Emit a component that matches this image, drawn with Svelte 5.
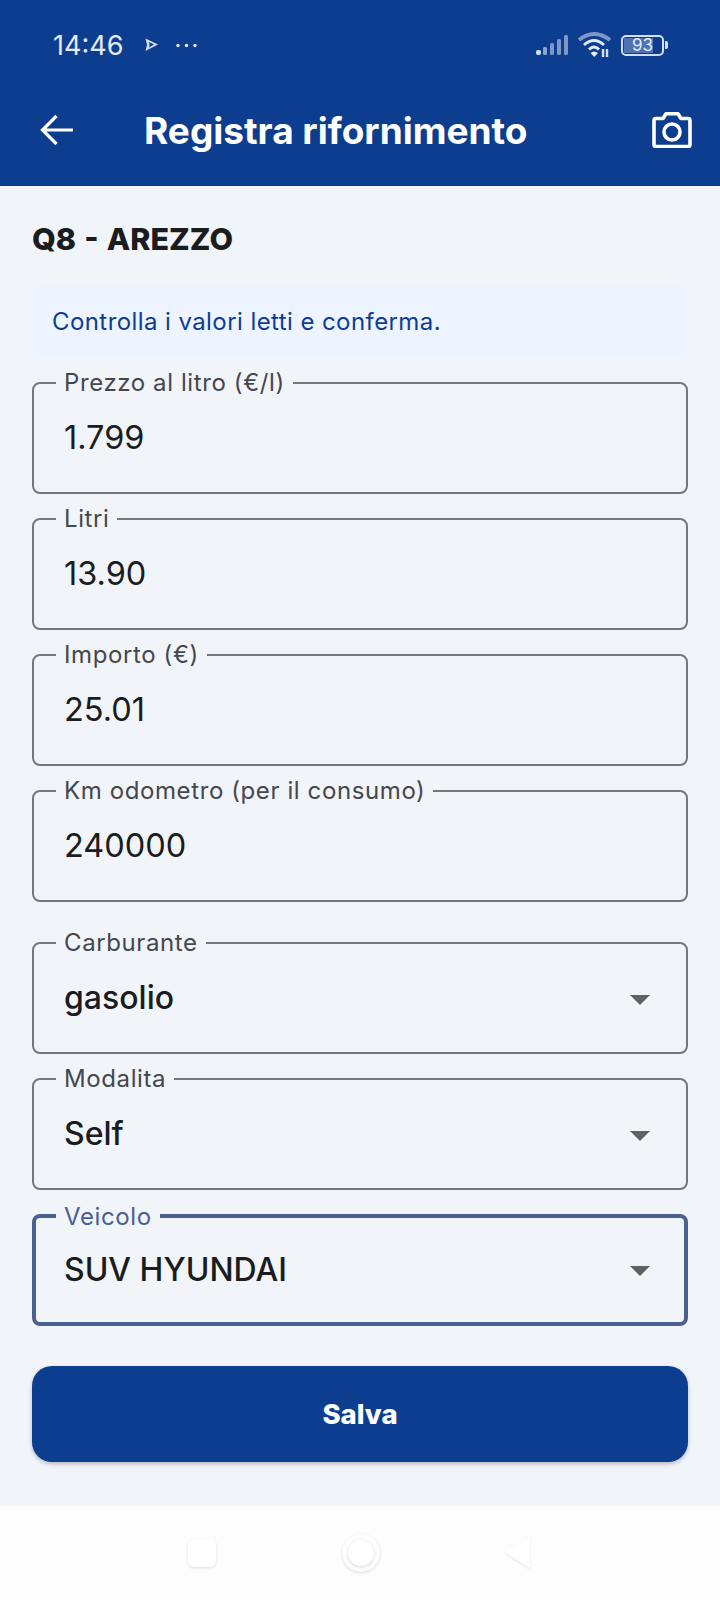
<script>
    const inputs = [
        { label: 'Prezzo al litro (€/l)', value: '1.799' },
        { label: 'Litri', value: '13.90' },
        { label: 'Importo (€)', value: '25.01' },
        { label: 'Km odometro (per il consumo)', value: '240000' }
    ];

    const selects = [
        { label: 'Carburante', value: 'gasolio', strong: true },
        { label: 'Modalita', value: 'Self', strong: true },
        { label: 'Veicolo', value: 'SUV HYUNDAI', focused: true }
    ];
</script>

<div class="screen">
    <header>
        <div class="status">
            <div class="status-left">
                <span class="time">14:46</span>
                <svg class="play" width="14" height="14" viewBox="0 0 14 14">
                    <path d="M0.5 0.5 L13 6.5 L0.5 13 L2 6.7 Z M4 4 L4.6 6.7 L4 9.4 L9 6.6 Z" fill="#d3def2" fill-rule="evenodd" />
                </svg>
                <svg class="dots" width="21" height="5" viewBox="0 0 21 5">
                    <circle cx="2" cy="2.5" r="1.7" fill="#e4ebf7" />
                    <circle cx="10.5" cy="2.5" r="1.7" fill="#e4ebf7" />
                    <circle cx="19" cy="2.5" r="1.7" fill="#e4ebf7" />
                </svg>
            </div>
            <div class="status-right">
                <svg width="34" height="22" viewBox="0 0 34 22">
                    <rect x="1" y="16" width="5" height="5" rx="2" fill="#d3def2" />
                    <rect x="8" y="13" width="4" height="8" rx="1.5" fill="#8ea5d0" />
                    <rect x="15" y="9" width="4" height="12" rx="1.5" fill="#7d97c8" />
                    <rect x="22" y="5" width="4" height="16" rx="1.5" fill="#7d97c8" />
                    <rect x="29" y="1" width="4" height="20" rx="1.5" fill="#7d97c8" />
                </svg>
                <svg class="wifi" width="34" height="26" viewBox="0 0 34 26">
                    <path d="M1 8 Q16 -4 32 8" fill="none" stroke="#7d97c8" stroke-width="3.8" />
                    <path d="M6 13 Q16 4 26 13" fill="none" stroke="#e4ebf7" stroke-width="3" />
                    <path d="M11 17.5 Q16 12.5 21 17.5" fill="none" stroke="#e4ebf7" stroke-width="3" />
                    <path d="M12.5 21 Q16 18 20 21 L16.2 25 Z" fill="#e4ebf7" />
                    <path d="M25 17 V25 M29 17 V25" stroke="#d3def2" stroke-width="2.4" />
                </svg>
                <div class="battery">
                    <div class="battery-body">
                        <span class="battery-fill"></span>
                        <span class="battery-text">93</span>
                    </div>
                    <span class="battery-tip"></span>
                </div>
            </div>
        </div>
        <div class="toolbar">
            <svg width="34" height="32" viewBox="0 0 34 32">
                <path d="M33 16 H3 M16.5 2 L2.5 16 L16.5 30" fill="none" stroke="#fff" stroke-width="3.2" />
            </svg>
            <h1>Registra rifornimento</h1>
            <svg width="40" height="36" viewBox="0 0 40 36">
                <path d="M2 8.5 Q2 6.5 4 6.5 H11 L14 1.8 H26 L29 6.5 H36 Q38 6.5 38 8.5 V32.5 Q38 34.5 36 34.5 H4 Q2 34.5 2 32.5 Z" fill="none" stroke="#fff" stroke-width="3.6" stroke-linejoin="round" />
                <circle cx="20" cy="20" r="8" fill="none" stroke="#fff" stroke-width="3.6" />
            </svg>
        </div>
    </header>

    <main>
        <h2>Q8 - AREZZO</h2>
        <p class="hint">Controlla i valori letti e conferma.</p>

        <div class="fields">
            {#each inputs as field}
                <fieldset>
                    <legend>{field.label}</legend>
                    <div class="value">{field.value}</div>
                </fieldset>
            {/each}
        </div>

        <div class="fields selects">
            {#each selects as field}
                <fieldset class:focused={field.focused}>
                    <legend>{field.label}</legend>
                    <div class="value" class:strong={field.strong}>{field.value}</div>
                    <span class="arrow"></span>
                </fieldset>
            {/each}
        </div>

        <button>Salva</button>
    </main>

    <nav>
        <span class="nav-square"></span>
        <span class="nav-circle"><span></span></span>
        <svg width="30" height="36" viewBox="0 0 30 36" class="nav-back">
            <path d="M28 2 V31 Q28 33 26 32 L2 17 Z" fill="#fff" />
        </svg>
    </nav>
</div>

<style>
    :global(body) {
        background: #f1f4f9;
    }

    .screen {
        display: flex;
        flex-direction: column;
        font-family: Inter, "Noto Sans", sans-serif;
        height: 1600px;
        width: 720px;
    }

    header {
        background: #0d3d8f;
        display: flex;
        flex-direction: column;
        height: 186px;
    }

    .status {
        align-items: center;
        display: flex;
        height: 50px;
        justify-content: space-between;
        padding: 20px 52px 0 53px;
    }

    .status-left {
        align-items: center;
        display: flex;
    }

    .status-right {
        align-items: center;
        display: flex;
        gap: 9px;
    }

    .time {
        color: #e4ebf7;
        font-size: 27px;
        font-weight: 400;
    }

    .play {
        margin-left: 22px;
    }

    .dots {
        margin-left: 17px;
    }

    .battery {
        align-items: center;
        display: flex;
        gap: 1px;
    }

    .battery-body {
        border: 2px solid #d3def2;
        border-radius: 5px;
        box-sizing: border-box;
        height: 21px;
        position: relative;
        width: 43px;
    }

    .battery-fill {
        background: #4f72b4;
        bottom: 1px;
        left: 1px;
        position: absolute;
        right: 9px;
        top: 1px;
    }

    .battery-text {
        color: #e4ebf7;
        font-size: 17px;
        left: 0;
        line-height: 17px;
        position: absolute;
        right: 0;
        text-align: center;
        top: 0;
    }

    .battery-tip {
        background: #d3def2;
        border-radius: 0 2px 2px 0;
        height: 8px;
        width: 3px;
    }

    .toolbar {
        align-items: center;
        box-sizing: border-box;
        display: flex;
        height: 116px;
        padding: 4px 28px 0 40px;
    }

    .toolbar svg:last-child {
        margin-left: auto;
    }

    h1 {
        color: #fff;
        font-size: 37px;
        font-weight: 700;
        margin: 0 0 0 70px;
        white-space: nowrap;
    }

    main {
        display: flex;
        flex: 1;
        flex-direction: column;
        padding: 0 32px;
    }

    h2 {
        color: #1a1c20;
        font-size: 30.5px;
        font-weight: 800;
        line-height: 36px;
        margin: 35px 0 0;
        word-spacing: 1.5px;
    }

    .hint {
        background: #edf4ff;
        border-radius: 8px;
        color: #0d3d8f;
        font-size: 24px;
        letter-spacing: 0.42px;
        line-height: 32px;
        margin: 28px 0 0;
        padding: 21px 20px 19px;
    }

    .fields {
        display: flex;
        flex-direction: column;
        gap: 13px;
        margin-top: 14px;
    }

    .selects {
        margin-top: 29px;
    }

    fieldset {
        border: 2px solid #74777f;
        border-radius: 8px;
        box-sizing: border-box;
        height: 123px;
        margin: 0;
        min-width: 0;
        padding: 0 30px;
        position: relative;
    }

    legend {
        color: #44474e;
        font-size: 24px;
        letter-spacing: 0.6px;
        line-height: 24px;
        margin-left: -8px;
        padding: 0 8px;
    }

    .value {
        color: #1a1c20;
        font-size: 32.5px;
        line-height: 40px;
        margin-top: 23px;
    }

    .strong {
        font-size: 32px;
        font-weight: 500;
    }

    .arrow {
        border-left: 10px solid transparent;
        border-right: 10px solid transparent;
        border-top: 10px solid #616161;
        position: absolute;
        right: 36px;
        top: 40px;
    }

    .focused {
        border: 4px solid #4a6090;
    }

    .focused legend {
        color: #4a6090;
        margin-left: -10px;
        padding-top: 2px;
    }

    .focused .value {
        font-size: 32px;
        font-weight: 450;
        margin-left: -2px;
        margin-top: 21px;
    }

    .focused .arrow {
        right: 34px;
        top: 37px;
    }

    button {
        background: #0d3d8f;
        border: none;
        border-radius: 20px;
        box-shadow: 0 2px 4px rgba(0, 0, 0, 0.25);
        color: #fff;
        font-family: inherit;
        font-size: 27.5px;
        font-weight: 800;
        height: 96px;
        margin-top: 40px;
    }

    nav {
        align-items: center;
        background: #fdfdfe;
        display: flex;
        height: 94px;
    }

    .nav-square {
        background: #fff;
        border-radius: 6px;
        box-shadow: 0 1px 3px rgba(0, 0, 0, 0.12);
        height: 28px;
        margin-left: 188px;
        width: 28px;
    }

    .nav-circle {
        align-items: center;
        border-radius: 50%;
        box-shadow: 0 1px 3px rgba(0, 0, 0, 0.14);
        box-sizing: border-box;
        display: flex;
        height: 38px;
        justify-content: center;
        margin-left: 126px;
        width: 38px;
    }

    .nav-circle span {
        background: #fff;
        border-radius: 50%;
        box-shadow: 0 1px 3px rgba(0, 0, 0, 0.16);
        height: 26px;
        width: 26px;
    }

    .nav-back {
        filter: drop-shadow(0 1px 1px rgba(0, 0, 0, 0.1));
        margin-left: 122px;
    }
</style>
